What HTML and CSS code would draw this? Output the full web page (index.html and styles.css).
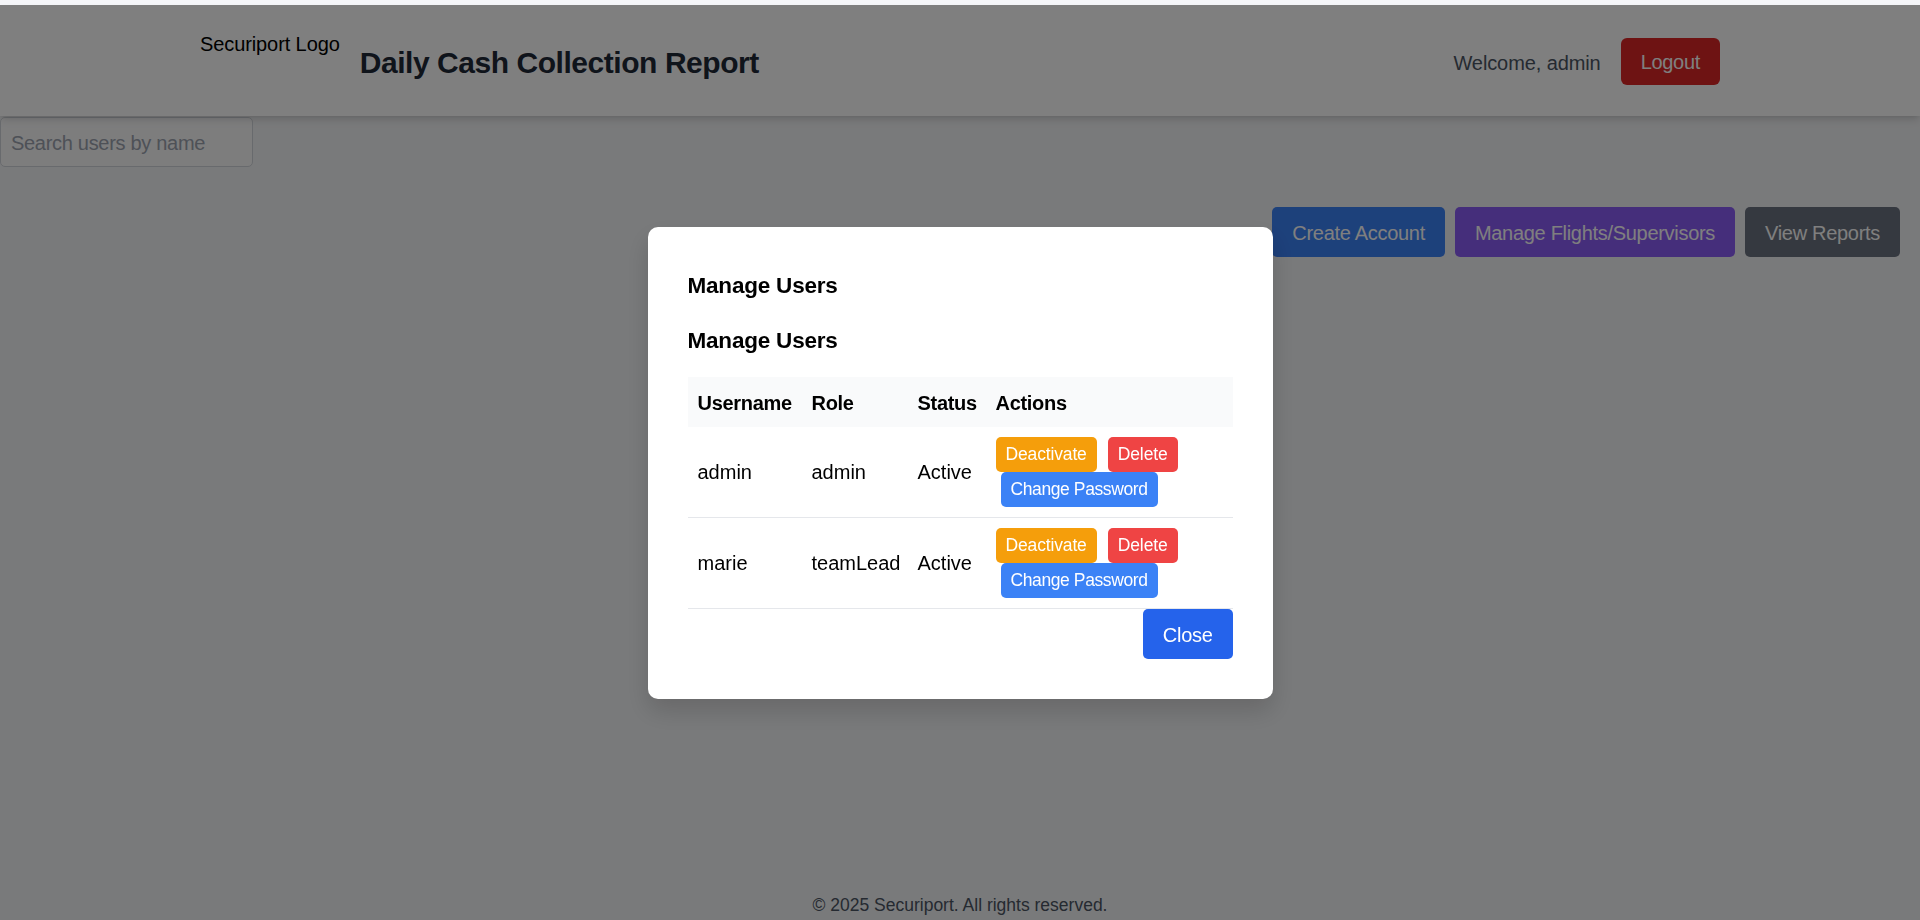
FILE: index.html
```html
<!DOCTYPE html>
<html lang="en">
<head>
<meta charset="utf-8">
<title>Daily Cash Collection Report</title>
<link rel="stylesheet" href="styles.css">
</head>
<body>
<div class="page">
  <header class="topbar">
    <div class="topbar-inner">
      <div class="brand">
        <span class="logo-alt">Securiport Logo</span>
        <h1 class="title">Daily Cash Collection Report</h1>
      </div>
      <div class="user">
        <span class="welcome">Welcome, admin</span>
        <button class="btn btn-logout">Logout</button>
      </div>
    </div>
  </header>

  <main class="main">
    <input class="search" type="text" placeholder="Search users by name">
    <div class="toolbar">
      <button class="btn btn-lg btn-blue">Create Account</button>
      <button class="btn btn-lg btn-violet">Manage Flights/Supervisors</button>
      <button class="btn btn-lg btn-gray">View Reports</button>
    </div>
  </main>

  <footer class="footer">© 2025 Securiport. All rights reserved.</footer>
</div>

<div class="overlay">
  <div class="modal">
    <h2 class="modal-title">Manage Users</h2>
    <h2 class="modal-title">Manage Users</h2>
    <table class="users">
      <colgroup>
        <col class="col-user">
        <col class="col-role">
        <col class="col-status">
        <col>
      </colgroup>
      <thead>
        <tr>
          <th>Username</th>
          <th>Role</th>
          <th>Status</th>
          <th>Actions</th>
        </tr>
      </thead>
      <tbody>
        <tr>
          <td>admin</td>
          <td>admin</td>
          <td>Active</td>
          <td>
            <div class="actions">
              <button class="btn btn-sm btn-amber">Deactivate</button>
              <button class="btn btn-sm btn-red btn-delete">Delete</button>
              <button class="btn btn-sm btn-sky btn-pass">Change Password</button>
            </div>
          </td>
        </tr>
        <tr>
          <td>marie</td>
          <td>teamLead</td>
          <td>Active</td>
          <td>
            <div class="actions">
              <button class="btn btn-sm btn-amber">Deactivate</button>
              <button class="btn btn-sm btn-red btn-delete">Delete</button>
              <button class="btn btn-sm btn-sky btn-pass">Change Password</button>
            </div>
          </td>
        </tr>
      </tbody>
    </table>
    <div class="modal-footer">
      <button class="btn btn-lg btn-close">Close</button>
    </div>
  </div>
</div>
</body>
</html>
```

FILE: styles.css
```css
* {
  box-sizing: border-box;
}

html, body {
  margin: 0;
  padding: 0;
}

body {
  padding-top: 5px;
  background: #f5f6f9;
  font-family: "Liberation Sans", Arial, sans-serif;
  font-size: 20px;
  color: #111827;
}

.page {
  min-height: calc(100vh - 5px);
  display: flex;
  flex-direction: column;
  background: #f3f4f6;
}

/* Header */
.topbar {
  background: #ffffff;
  height: 111px;
  box-shadow: 0 5px 8px -1px rgba(0, 0, 0, 0.12), 0 2px 5px -2px rgba(0, 0, 0, 0.1);
  position: relative;
  z-index: 1;
}

.topbar-inner {
  max-width: 1600px;
  height: 100%;
  margin: 0 auto;
  padding: 2px 40px 0;
  display: flex;
  align-items: center;
  justify-content: space-between;
}

.brand {
  display: flex;
  align-items: center;
}

.logo-alt {
  display: block;
  height: 60px;
  padding-top: 1px;
  line-height: 23px;
  font-size: 20px;
  color: #000;
  margin-right: 20px;
  letter-spacing: -0.1px;
}

.title {
  margin: 0;
  padding-top: 2px;
  font-size: 30px;
  line-height: 38px;
  font-weight: 700;
  color: #1f2937;
  letter-spacing: -0.45px;
}

.user {
  display: flex;
  align-items: center;
  gap: 20px;
}

.welcome {
  color: #4b5563;
  font-size: 20px;
  line-height: 30px;
  padding-top: 2px;
  letter-spacing: -0.1px;
}

/* Buttons */
.btn {
  font-family: inherit;
  border: none;
  color: #fff;
  cursor: pointer;
  border-radius: 5px;
  margin: 0;
}

.btn-logout {
  height: 47px;
  padding: 2px 20px 0;
  font-size: 20px;
  background: #dc2626;
  border-radius: 6px;
  letter-spacing: -0.3px;
}

.btn-lg {
  height: 50px;
  padding: 2px 20px 0;
  font-size: 20px;
  line-height: 30px;
  letter-spacing: -0.3px;
}

.btn-sm {
  height: 35px;
  padding: 1px 10px 0;
  font-size: 17.5px;
  line-height: 25px;
  letter-spacing: -0.4px;
}

.btn-blue { background: #3b82f6; }
.btn-violet { background: #8b5cf6; }
.btn-gray { background: #6b7280; }
.btn-amber { background: #f59e0b; letter-spacing: -0.15px; }
.btn-red { background: #ef4444; letter-spacing: -0.1px; }
.btn-sky { background: #3b82f6; }
.btn-close { background: #2563eb; }

/* Main */
.main {
  flex: 1;
  display: flex;
  flex-direction: column;
}

.search {
  margin-top: 1px;
  width: 253px;
  height: 50px;
  padding: 2px 10px 0;
  border: 1px solid #d1d5db;
  border-radius: 5px;
  background: #fafafb;
  font-family: inherit;
  font-size: 20px;
  color: #111827;
  letter-spacing: -0.3px;
}

.search::placeholder {
  color: #9ca3af;
}

.toolbar {
  margin-top: 40px;
  padding-right: 20px;
  display: flex;
  justify-content: flex-end;
  gap: 10px;
}

/* Footer */
.footer {
  padding: 18px 0 2px;
  text-align: center;
  font-size: 17.5px;
  line-height: 25px;
  color: #4b5563;
}

/* Modal */
.overlay {
  position: fixed;
  top: 5px;
  left: 0;
  right: 0;
  bottom: 0;
  background: rgba(0, 0, 0, 0.5);
  display: flex;
  align-items: center;
  justify-content: center;
  z-index: 10;
}

.modal {
  width: 625px;
  padding: 40px;
  background: #fff;
  border-radius: 10px;
  box-shadow: 0 12px 24px rgba(0, 0, 0, 0.15);
}

.modal-title {
  margin: 0 0 20px;
  padding-top: 3px;
  font-size: 22.5px;
  line-height: 32px;
  font-weight: 700;
  color: #000;
  letter-spacing: -0.2px;
}

.users {
  width: 100%;
  table-layout: fixed;
  border-collapse: collapse;
  color: #000;
}

.col-user { width: 114px; }
.col-role { width: 106px; }
.col-status { width: 78px; }

.users thead tr {
  background: #f9fafb;
}

.users th {
  padding: 11px 10px 9px;
  text-align: left;
  font-weight: 700;
  font-size: 20px;
  line-height: 30px;
  white-space: nowrap;
  letter-spacing: -0.3px;
}

.users td {
  padding: 10px;
  font-size: 20px;
  line-height: 30px;
  vertical-align: middle;
  border-bottom: 1px solid #e5e7eb;
  white-space: nowrap;
}

.actions {
  display: flex;
  flex-wrap: wrap;
  white-space: normal;
}

.btn-delete {
  margin-left: 11px;
}

.btn-pass {
  margin-left: 5px;
}

.modal-footer {
  display: flex;
  justify-content: flex-end;
}
```
